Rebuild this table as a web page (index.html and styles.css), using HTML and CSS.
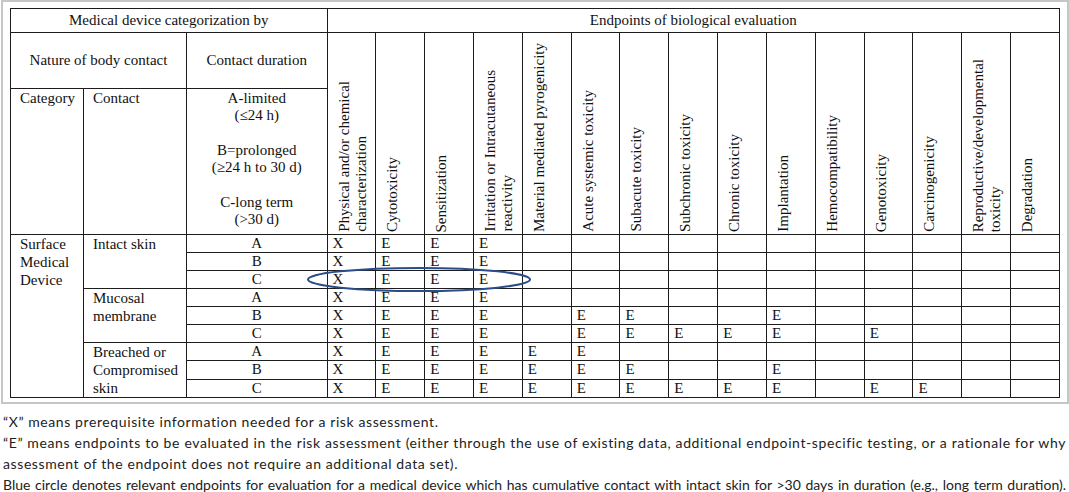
FILE: index.html
```html
<!DOCTYPE html>
<html>
<head>
<meta charset="utf-8">
<link rel="stylesheet" href="styles.css">
</head>
<body>
<div class="figure">
  <div class="table-wrap">
    <table class="matrix">
      <colgroup>
        <col class="c-cat"><col class="c-contact"><col class="c-dur">
        <col span="15" class="c-ep">
      </colgroup>
      <tr class="r1">
        <td colspan="3" class="center">Medical device categorization by</td>
        <td colspan="15" class="center">Endpoints of biological evaluation</td>
      </tr>
      <tr class="r2">
        <td colspan="2" class="center">Nature of body contact</td>
        <td class="center">Contact duration</td>
        <td rowspan="2" class="vh"><div>Physical and/or chemical<br>characterization</div></td>
        <td rowspan="2" class="vh"><div>Cytotoxicity</div></td>
        <td rowspan="2" class="vh"><div>Sensitization</div></td>
        <td rowspan="2" class="vh"><div>Irritation or Intracutaneous<br>reactivity</div></td>
        <td rowspan="2" class="vh"><div>Material mediated pyrogenicity</div></td>
        <td rowspan="2" class="vh"><div>Acute systemic toxicity</div></td>
        <td rowspan="2" class="vh"><div>Subacute toxicity</div></td>
        <td rowspan="2" class="vh"><div>Subchronic toxicity</div></td>
        <td rowspan="2" class="vh"><div>Chronic toxicity</div></td>
        <td rowspan="2" class="vh"><div>Implantation</div></td>
        <td rowspan="2" class="vh"><div>Hemocompatibility</div></td>
        <td rowspan="2" class="vh"><div>Genotoxicity</div></td>
        <td rowspan="2" class="vh"><div>Carcinogenicity</div></td>
        <td rowspan="2" class="vh"><div>Reproductive/developmental<br>toxicity</div></td>
        <td rowspan="2" class="vh"><div>Degradation</div></td>
      </tr>
      <tr class="r3">
        <td class="lbl">Category</td>
        <td class="lbl">Contact</td>
        <td class="dur">A-limited<br>(≤24 h)<br><br>B=prolonged<br>(≥24 h to 30 d)<br><br>C-long term<br>(&gt;30 d)</td>
      </tr>
      <tr class="d">
        <td rowspan="9" class="lbl">Surface<br>Medical<br>Device</td>
        <td rowspan="3" class="lbl">Intact skin</td>
        <td class="center">A</td>
        <td>X</td><td>E</td><td>E</td><td>E</td><td></td><td></td><td></td><td></td><td></td><td></td><td></td><td></td><td></td><td></td><td></td>
      </tr>
      <tr class="d">
        <td class="center">B</td>
        <td>X</td><td>E</td><td>E</td><td>E</td><td></td><td></td><td></td><td></td><td></td><td></td><td></td><td></td><td></td><td></td><td></td>
      </tr>
      <tr class="d">
        <td class="center">C</td>
        <td>X</td><td>E</td><td>E</td><td>E</td><td></td><td></td><td></td><td></td><td></td><td></td><td></td><td></td><td></td><td></td><td></td>
      </tr>
      <tr class="d">
        <td rowspan="3" class="lbl">Mucosal<br>membrane</td>
        <td class="center">A</td>
        <td>X</td><td>E</td><td>E</td><td>E</td><td></td><td></td><td></td><td></td><td></td><td></td><td></td><td></td><td></td><td></td><td></td>
      </tr>
      <tr class="d">
        <td class="center">B</td>
        <td>X</td><td>E</td><td>E</td><td>E</td><td></td><td>E</td><td>E</td><td></td><td></td><td>E</td><td></td><td></td><td></td><td></td><td></td>
      </tr>
      <tr class="d">
        <td class="center">C</td>
        <td>X</td><td>E</td><td>E</td><td>E</td><td></td><td>E</td><td>E</td><td>E</td><td>E</td><td>E</td><td></td><td>E</td><td></td><td></td><td></td>
      </tr>
      <tr class="d">
        <td rowspan="3" class="lbl">Breached or<br>Compromised<br>skin</td>
        <td class="center">A</td>
        <td>X</td><td>E</td><td>E</td><td>E</td><td>E</td><td>E</td><td></td><td></td><td></td><td></td><td></td><td></td><td></td><td></td><td></td>
      </tr>
      <tr class="d">
        <td class="center">B</td>
        <td>X</td><td>E</td><td>E</td><td>E</td><td>E</td><td>E</td><td>E</td><td></td><td></td><td>E</td><td></td><td></td><td></td><td></td><td></td>
      </tr>
      <tr class="d">
        <td class="center">C</td>
        <td>X</td><td>E</td><td>E</td><td>E</td><td>E</td><td>E</td><td>E</td><td>E</td><td>E</td><td>E</td><td></td><td>E</td><td>E</td><td></td><td></td>
      </tr>
    </table>
    <svg class="ring" width="226" height="27" viewBox="0 0 226 27">
      <ellipse cx="113" cy="13.5" rx="111" ry="11.5" fill="none" stroke="#2b4c89" stroke-width="2"/>
    </svg>
  </div>
</div>
<div class="notes">
  <p class="wide">“X” means prerequisite information needed for a risk assessment.</p>
  <p class="wide just">“E” means endpoints to be evaluated in the risk assessment (either through the use of existing data, additional endpoint-specific testing, or a rationale for why assessment of the endpoint does not require an additional data set).</p>
  <p class="tight">Blue circle denotes relevant endpoints for evaluation for a medical device which has cumulative contact with intact skin for &gt;30 days in duration (e.g., long term duration).</p>
</div>
</body>
</html>
```

FILE: styles.css
```css
html, body {
  margin: 0;
  padding: 0;
  background: #fff;
}

body {
  font-family: "Liberation Serif", "Times New Roman", serif;
  color: #111;
}

.figure {
  box-sizing: border-box;
  width: 1068px;
  margin-left: 1px;
  border: 2px solid #c6c6c6;
  padding: 6px 6px 4px 7px;
}

.table-wrap {
  position: relative;
  width: 1050px;
}

.matrix {
  border-collapse: collapse;
  table-layout: fixed;
  width: 1050px;
  font-size: 15px;
  line-height: 17.25px;
}

.c-cat { width: 73px; }
.c-contact { width: 103px; }
.c-dur { width: 140.5px; }

.matrix td {
  border: 1px solid #1c1c1c;
  padding: 0;
  vertical-align: top;
  white-space: nowrap;
}

.matrix .r1 { height: 24px; }
.matrix .r2 { height: 56px; }
.matrix .r3 { height: 146px; }
.matrix .d { height: 18px; }

.matrix .center {
  text-align: center;
  vertical-align: middle;
}

.matrix .r1 td {
  vertical-align: middle;
}

.matrix .lbl {
  padding-left: 9px;
  padding-top: 1px;
}

.matrix .dur {
  text-align: center;
  padding-top: 1px;
}

.matrix .d td {
  line-height: 17px;
  padding-left: 5px;
  vertical-align: middle;
}

.matrix .d td.lbl {
  line-height: 18px;
  padding-left: 9px;
  padding-top: 0;
  vertical-align: top;
}

.matrix .d td.center {
  padding-left: 0;
}

.matrix .vh {
  vertical-align: bottom;
  padding: 0 0 2px 8px;
}

.matrix .vh div {
  writing-mode: vertical-rl;
  transform: rotate(180deg);
  white-space: nowrap;
}

.ring {
  position: absolute;
  left: 296px;
  top: 258px;
}

.notes {
  width: 1063px;
  margin: 7px 0 0 3px;
  font-family: Lato, "Noto Sans", sans-serif;
  font-size: 14px;
  line-height: 21px;
  color: #222;
}

.notes p {
  margin: 0;
}

.notes .wide {
  letter-spacing: 0.6px;
}

.notes .just {
  text-align: justify;
}

.notes .tight {
  white-space: nowrap;
  letter-spacing: 0;
  word-spacing: -1.5px;
  text-align: justify;
  text-align-last: justify;
}
```
